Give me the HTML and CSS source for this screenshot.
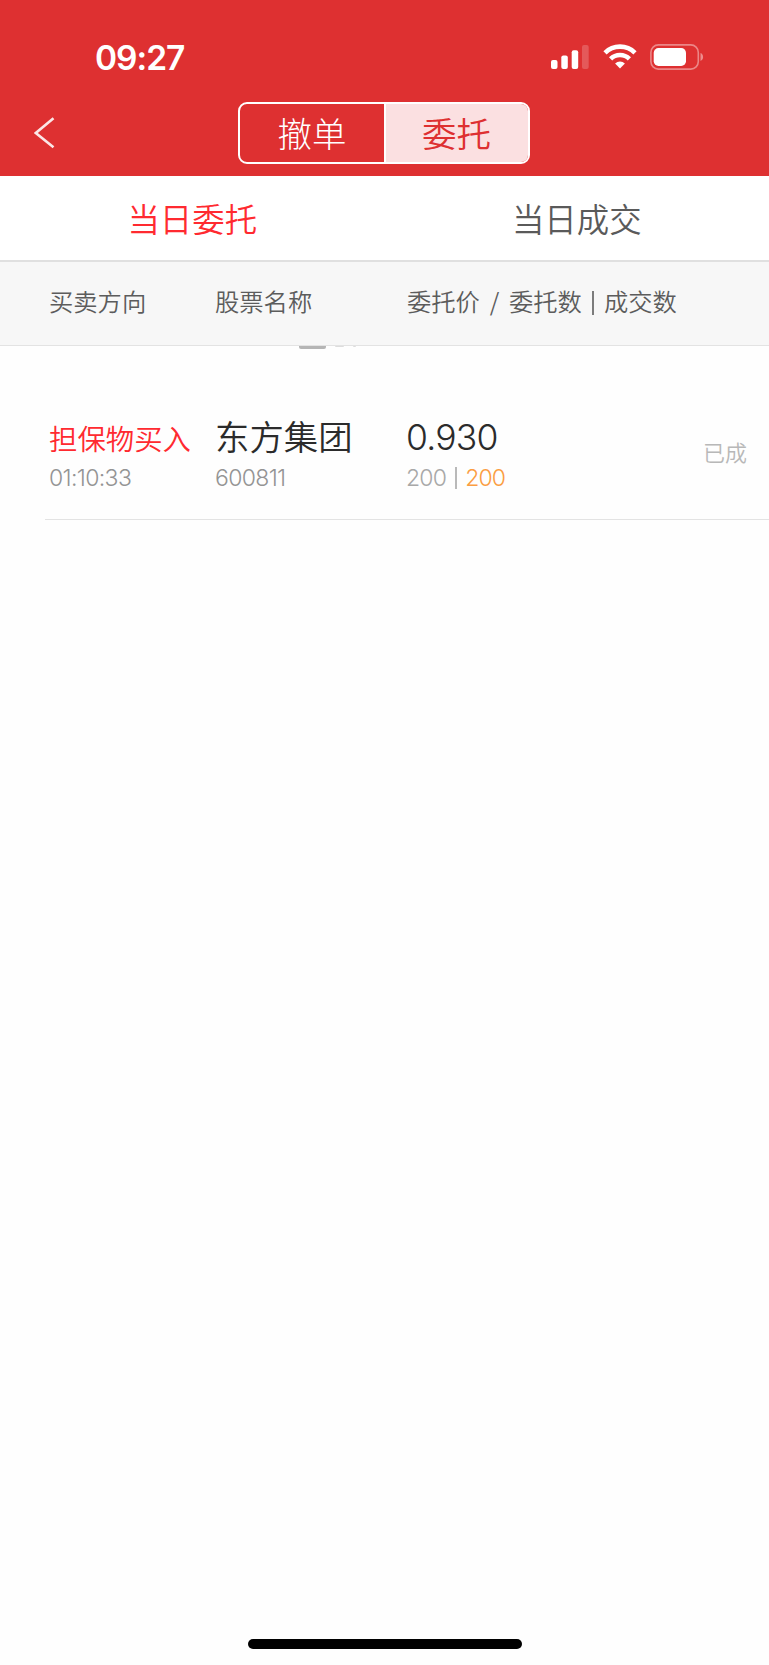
FILE: index.html
```html
<!DOCTYPE html>
<html lang="zh-CN">
<head>
  <meta charset="UTF-8">
  <meta name="viewport" content="width=device-width, initial-scale=1">
  <title>当日委托</title>
  <link rel="stylesheet" href="styles.css">
</head>
<body>

  <header class="header">
    <!-- 状态栏 -->
    <div class="status-bar">
      <span class="time">09:27</span>
      <div class="status-icons">
        <svg class="signal" width="38" height="24" viewBox="0 0 38 24" fill="#fff">
          <rect x="0" y="15" width="6.5" height="9" rx="2"/>
          <rect x="10.3" y="10.5" width="6.5" height="13.5" rx="2"/>
          <rect x="20.7" y="5.2" width="6.5" height="18.8" rx="2"/>
          <rect x="31" y="0" width="6.7" height="24" rx="2" opacity=".2"/>
        </svg>
        <svg class="wifi" width="34" height="25" viewBox="0 0 34 25" fill="none" stroke="#fff" stroke-width="4.6">
          <path d="M2 8.8a21.4 21.4 0 0 1 30 0"/>
          <path d="M7.6 14.8a13.4 13.4 0 0 1 18.8 0"/>
          <path d="M17 24.5l-4.9-5a7 7 0 0 1 9.8 0z" fill="#fff" stroke="none"/>
        </svg>
        <svg class="battery" width="54" height="26" viewBox="0 0 54 26">
          <rect x=".9" y=".9" width="47.4" height="24.2" rx="7.5" fill="none" stroke="#fff" stroke-opacity=".42" stroke-width="1.6"/>
          <rect x="3.7" y="4" width="32.3" height="18" rx="4.8" fill="#fff"/>
          <path d="M50.5 9v8c1.6-.6 2.6-2.2 2.6-4s-1-3.4-2.6-4z" fill="#fff" opacity=".45"/>
        </svg>
      </div>
    </div>

    <!-- 导航 -->
    <nav class="nav">
      <svg class="back" width="22" height="34" viewBox="0 0 22 34" fill="none" stroke="#fff" stroke-opacity=".88" stroke-width="2.6">
        <path d="M19.5 2.2L1.8 17l17.7 14.2"/>
      </svg>
      <div class="segment">
        <div class="segment-item">撤单</div>
        <div class="segment-item active">委托</div>
      </div>
    </nav>
  </header>

  <div class="tabs">
    <div class="tab active">当日委托</div>
    <div class="tab">当日成交</div>
  </div>

  <div class="list-head">
    <span class="col-side">买卖方向</span>
    <span class="col-name">股票名称</span>
    <span class="col-price">委托价<i class="slash">/</i>委托数<i class="bar"></i>成交数</span>
  </div>

  <main class="list">
    <!-- 下拉刷新提示露出的下沿 -->
    <div class="refresh-hint"><i></i><i></i><i></i></div>

    <div class="order">
      <div class="col-side">
        <div class="side">担保物买入</div>
        <div class="sub">01:10:33</div>
      </div>
      <div class="col-name">
        <div class="stock">东方集团</div>
        <div class="sub code">600811</div>
      </div>
      <div class="col-price">
        <div class="price">0.930</div>
        <div class="sub amount">200<i class="bar"></i><span class="deal">200</span></div>
      </div>
      <div class="state">已成</div>
    </div>
  </main>

  <div class="home-indicator"></div>

</body>
</html>
```
FILE: styles.css
```css
* { margin: 0; padding: 0; box-sizing: border-box; }

body {
  display: flex;
  flex-direction: column;
  height: 1665px;
  background: #fefefe;
  color: #2b2b2b;
  font-family: Inter, "Noto Sans CJK SC", sans-serif;
  font-weight: 350;
  white-space: nowrap;
  overflow: hidden;
}
svg { display: block; }
i { font-style: normal; }

/* === 顶部 === */
.header {
  height: 176px;
  background: #de3031;
  color: #fff;
}
.status-bar {
  display: flex;
  justify-content: space-between;
  height: 90px;
  padding: 38px 65px 0 95px;
}
.time {
  font-size: 33.5px;
  font-weight: 600;
  line-height: 40px;
  letter-spacing: -1px;
}
.status-icons {
  display: flex;
  align-items: flex-start;
  padding-top: 6px;
}
.signal { margin: 1px 14px 0 0; }
.wifi { margin-right: 13px; }

.nav {
  display: flex;
  padding: 12px 0 0 34px;
}
.back { margin-top: 14px; }
.segment {
  display: flex;
  width: 292px;
  height: 62px;
  margin-left: 182px;
  border: 2px solid #fff;
  border-radius: 9px;
  overflow: hidden;
}
.segment-item {
  width: 144px;
  text-align: center;
  font-size: 34.5px;
  font-weight: 300;
  line-height: 61px;
}
.segment-item.active {
  flex: 1;
  padding-right: 1px;
  background: #fbe0e1;
  border-left: 2px solid #fff;
  color: #de3031;
  font-weight: 350;
}

/* === 标签 === */
.tabs {
  display: flex;
  height: 86px;
  border-bottom: 2px solid #e0e0e0;
  background: #fff;
}
.tab {
  flex: 1;
  text-align: center;
  font-size: 32.4px;
  line-height: 89px;
  color: #5a5a5a;
}
.tab.active { color: #ff2a30; }

/* === 表头 === */
.list-head {
  display: flex;
  height: 84px;
  padding-left: 49px;
  border-bottom: 1px solid #e3e3e3;
  background: #f7f7f7;
  color: #5c5c5c;
  font-size: 24.3px;
  line-height: 81px;
}
.col-side { width: 166px; }
.col-name { width: 192px; }
.slash {
  margin: 0 9.8px;
  font-family: "Noto Sans CJK SC", sans-serif;
  line-height: 1;
}
.bar {
  display: inline-block;
  width: 2px;
  height: 24px;
  margin: 0 10px;
  background: currentColor;
  opacity: .8;
  vertical-align: -4px;
}

/* === 委托列表 === */
.list {
  flex: 1;
  padding-left: 45px;
}
.refresh-hint {
  display: flex;
  height: 3px;
  padding-left: 254px;
}
.refresh-hint i {
  width: 27px;
  height: 3px;
  margin-right: 9px;
  border-radius: 0 0 2px 2px;
  background: #b5b5b5;
}
.refresh-hint i + i { width: 9px; height: 1px; background: #ddd; }
.refresh-hint i + i + i { width: 3px; }

.order {
  display: flex;
  height: 171px;
  padding: 64px 0 0 4px;
  border-bottom: 1px solid #e3e3e3;
}
.side, .stock, .price { height: 50px; line-height: 50px; }
.side { padding-top: 2px; font-size: 28.4px; color: #ff2a30; }
.stock { font-size: 34.4px; }
.price {
  margin-left: -1px;
  font-size: 35.5px;
  line-height: 49px;
  letter-spacing: -.8px;
}
.sub {
  font-size: 23px;
  line-height: 31px;
  color: #949494;
  letter-spacing: -.65px;
}
.amount { margin-left: -1px; color: #a8a8a8; letter-spacing: -.8px; }
.amount .bar { margin: 0 8px 0 9px; height: 22px; vertical-align: -3px; }
.deal { color: #fb9d42; }
.state {
  margin-left: auto;
  padding: 24px 22px 0 0;
  font-size: 22px;
  line-height: 32px;
  color: #b8b8b8;
}

.home-indicator {
  width: 274px;
  height: 10px;
  margin: 0 auto 16px;
  border-radius: 5px;
  background: #000;
}
```
